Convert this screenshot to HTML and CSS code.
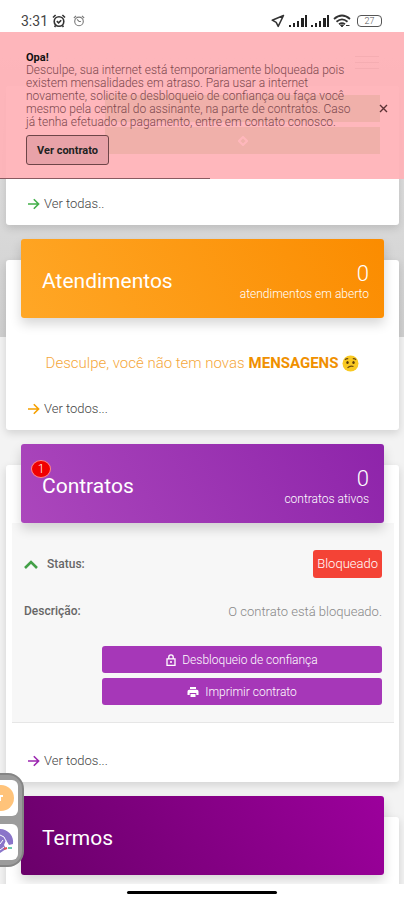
FILE: index.html
```html
<!DOCTYPE html>
<html lang="pt-BR">
<head>
    <meta charset="UTF-8">
    <meta name="viewport" content="width=device-width, initial-scale=1.0">
    <title>Central do Assinante</title>
    <link rel="stylesheet" href="styles.css">
</head>
<body>
    <div class="status-bar">
        <div class="status-left">
            <span class="clock">3:31</span>
            <svg width="14" height="14" viewBox="0 0 14 14" fill="none" stroke="#333" stroke-width="1.6">
                <circle cx="7" cy="7.5" r="4.8"/>
                <path d="M1 3.5L3.6 1M13 3.5L10.4 1M4.8 7.2l1.8 1.7 2.6-2.6M3.6 11.4L2.6 13M10.4 11.4l1 1.6"/>
            </svg>
            <svg class="alarm-thin" width="12" height="12" viewBox="0 0 14 14" fill="none" stroke="#777" stroke-width="1.3">
                <circle cx="7" cy="7.5" r="5"/>
                <path d="M1 3.5L3.6 1M13 3.5L10.4 1M4.8 5l2.4 2.6h2"/>
            </svg>
        </div>
        <div class="status-right">
            <svg width="14" height="14" viewBox="0 0 14 14" fill="none" stroke="#333" stroke-width="1.5" stroke-linejoin="round">
                <path d="M12.5 1.5L1.2 6.2l4 2.2 2 4z"/>
            </svg>
            <svg width="18" height="12" viewBox="0 0 18 12" fill="#222">
                <path d="M0 10h2v2H0zM4 8h2v4H4zM8 6h2v6H8zM12 3h3v9h-3zM16 0h2v12h-2z"/>
            </svg>
            <svg width="18" height="12" viewBox="0 0 18 12" fill="#222">
                <path d="M0 10h2v2H0zM4 8h2v4H4zM8 6h2v6H8zM12 3h3v9h-3zM16 0h2v12h-2z"/>
            </svg>
            <svg width="18" height="14" viewBox="0 0 18 14" fill="none" stroke="#333" stroke-width="1.8">
                <path d="M1 5Q9-2 17 5M3.5 7.7q5.500-4.700 11 0M6 10.300q3-2.400 6 0"/>
                <path d="M7.500 11h3L9 13zM13 11.500h3.500" fill="#333" stroke-width="1"/>
            </svg>
            <span class="battery">27</span>
        </div>
    </div>

    <main>
        <div class="backdrop"></div>

        <div class="alert" role="alert">
            <div class="alert-text">
                <strong>Opa!</strong>
                <p>Desculpe, sua internet está temporariamente bloqueada pois existem mensalidades em atraso. Para usar a internet novamente, solicite o desbloqueio de confiança ou faça você mesmo pela central do assinante, na parte de contratos. Caso já tenha efetuado o pagamento, entre em contato conosco.</p>
                <button class="alert-button">Ver contrato</button>
            </div>
            <button class="alert-close" aria-label="Fechar">
                <svg width="9" height="9" viewBox="0 0 9 9" stroke="#5c3236" stroke-width="1.4"><path d="M1 1l7 7M8 1L1 8"/></svg>
            </button>
            <div class="alert-progress"></div>
        </div>

        <header class="navbar">
            <button class="menu" aria-label="Menu"><span></span><span></span><span></span></button>
        </header>

        <section class="card card-faturas">
            <div class="faturas-actions">
                <div class="bar"></div>
                <div class="bar"><svg width="10" height="10" viewBox="0 0 10 10" fill="none" stroke="#fff" stroke-width="2"><path d="M5 1l4 4-4 4-4-4z"/></svg></div>
            </div>
            <a class="more green" href="#">
                <svg width="12" height="12" viewBox="0 0 12 12"><path d="M0 6h10.500M5.800 1.200L10.600 6l-4.800 4.800"/></svg>
                <span>Ver todas..</span>
            </a>
        </section>

        <section class="card">
            <div class="banner orange-banner">
                <h2>Atendimentos</h2>
                <div class="total"><b>0</b><span>atendimentos em aberto</span></div>
            </div>
            <p class="empty">Desculpe, você não tem novas <strong>MENSAGENS</strong>
                <svg width="17" height="17" viewBox="0 0 17 17">
                    <circle cx="8.500" cy="8.500" r="8" fill="#f9c922"/>
                    <path d="M3 4.800q1.500-1.500 3.200-1M10.800 3.800q1.800-.5 3.200 1M5.500 12.800q2.500-2.500 6-1.300" fill="none" stroke="#6b4a10" stroke-width="1.200"/>
                    <ellipse cx="5.500" cy="7.500" rx="1.200" ry="1.600" fill="#5a3c0c"/>
                    <ellipse cx="11.500" cy="7.500" rx="1.200" ry="1.600" fill="#5a3c0c"/>
                </svg>
            </p>
            <a class="more orange" href="#">
                <svg width="12" height="12" viewBox="0 0 12 12"><path d="M0 6h10.500M5.800 1.200L10.600 6l-4.800 4.800"/></svg>
                <span>Ver todos...</span>
            </a>
        </section>

        <section class="card">
            <div class="banner purple-banner">
                <span class="badge">1</span>
                <h2>Contratos</h2>
                <div class="total"><b>0</b><span>contratos ativos</span></div>
            </div>
            <div class="contract">
                <div class="row">
                    <svg width="14" height="9" viewBox="0 0 14 9" fill="none" stroke="#43a047" stroke-width="2.600"><path d="M1 8l6-6 6 6"/></svg>
                    <span class="label">Status:</span>
                    <span class="status">Bloqueado</span>
                </div>
                <div class="row">
                    <span class="label">Descrição:</span>
                    <span class="value">O contrato está bloqueado.</span>
                </div>
                <div class="contract-actions">
                    <button>
                        <svg width="10" height="12" viewBox="0 0 10 12" fill="none" stroke="#fff" stroke-width="1.300"><path d="M1 4.800h8v6.500H1zM2.800 4.800V3a2.200 2.200 0 0 1 4.400 0v1.800"/><circle cx="5" cy="8" r="1" fill="#fff" stroke="none"/></svg>
                        Desbloqueio de confiança
                    </button>
                    <button>
                        <svg width="12" height="12" viewBox="0 0 12 12" fill="#fff"><path d="M3 1h6v2H3zM2.500 3.700h7A1.800 1.800 0 0 1 11.500 5.500V9H9.300V7H2.700v2H.5V5.500a1.800 1.800 0 0 1 2-1.800zM3.500 8h5v3h-5z"/></svg>
                        Imprimir contrato
                    </button>
                </div>
            </div>
            <a class="more purple" href="#">
                <svg width="12" height="12" viewBox="0 0 12 12"><path d="M0 6h10.500M5.800 1.200L10.600 6l-4.800 4.800"/></svg>
                <span>Ver todos...</span>
            </a>
        </section>

        <section class="card card-termos">
            <div class="banner dark-banner">
                <h2>Termos</h2>
            </div>
        </section>

        <div class="side-panel">
            <div class="app">
                <svg width="18" height="36" viewBox="0 0 18 36"><circle cx="1" cy="18" r="13" fill="#ffc37a"/><path d="M0 15h3v2H1v4H0z" fill="#fff"/></svg>
            </div>
            <div class="app">
                <svg width="18" height="36" viewBox="0 0 18 36">
                    <path d="M0 5a13 13 0 0 1 13 15l-4 1-3-5-2 5 2 4-6 4z" fill="#8a74c9"/>
                    <path d="M0 11q5 1 6 6M0 20l3-4M0 26l4-3" stroke="#fff" stroke-width="1" fill="none"/>
                    <path d="M4 25l3-1" stroke="#e05252" stroke-width="2"/>
                    <path d="M8 24h4" stroke="#6cc7b0" stroke-width="2"/>
                </svg>
            </div>
        </div>
    </main>

    <div class="nav-bar"><div class="pill"></div></div>
</body>
</html>
```

FILE: styles.css
```css
* {
    box-sizing: border-box;
}

body {
    font-family: Roboto, sans-serif;
    font-weight: 300;
    background: #fff;
    color: #444;
    margin: 0;
    height: 100vh;
    display: flex;
    flex-direction: column;
}

button {
    font-family: inherit;
    border: none;
    cursor: pointer;
}

h2, p {
    margin: 0;
}

svg {
    flex-shrink: 0;
}

/* phone status bar */
.status-bar {
    display: flex;
    justify-content: space-between;
    align-items: center;
    height: 32px;
    padding: 10px 22px 0 21px;
    flex-shrink: 0;
}

.status-left,
.status-right {
    display: flex;
    align-items: center;
    gap: 4px;
}

.clock {
    font-size: 14px;
    font-weight: 400;
    color: #444;
}

.alarm-thin {
    margin-left: 3px;
}

.battery {
    width: 25px;
    height: 12px;
    margin-left: 2px;
    border: 1px solid #555;
    border-radius: 4px;
    font-size: 9px;
    line-height: 10px;
    text-align: center;
    color: #555;
}

main {
    position: relative;
    flex: 1;
    overflow: hidden;
    background: #f3f3f3;
}

.backdrop {
    position: absolute;
    top: 0;
    left: 0;
    right: 0;
    height: 305px;
    background: linear-gradient(#e8e8e8, #d0d0d0);
}

/* blocked internet warning */
.alert {
    position: absolute;
    top: 0;
    left: 0;
    right: 0;
    z-index: 5;
    display: flex;
    align-items: center;
    padding: 19px 16px 14px 26px;
    background: rgba(255, 178, 183, 0.93);
}

.alert-text {
    flex: 1;
    padding-right: 20px;
    font-size: 12px;
    line-height: 13px;
    color: #7d484e;
}

.alert-text strong {
    display: block;
    font-size: 11px;
    font-weight: 700;
    color: #111;
}

.alert-button {
    height: 30px;
    margin-top: 6px;
    padding: 0 10px;
    border: 1px solid #6e4548;
    border-radius: 3px;
    background: #e8a2a8;
    font-size: 11px;
    font-weight: 700;
    color: #222;
}

.alert-close {
    display: flex;
    padding: 0;
    background: none;
}

.alert-progress {
    position: absolute;
    left: 0;
    bottom: 0;
    width: 52%;
    height: 1px;
    background: #8a5a60;
}

.navbar {
    position: relative;
    display: flex;
    justify-content: flex-end;
    padding: 24px 25px 0;
    height: 54px;
}

.menu {
    display: flex;
    flex-direction: column;
    gap: 5px;
    width: 24px;
    padding: 0;
    background: none;
}

.menu span {
    height: 1px;
    width: 100%;
    background: #777;
}

.card {
    position: relative;
    margin: 0 5px 35px 6px;
    padding: 0 15px 12px;
    background: #fff;
    border-radius: 3px;
    box-shadow: 0 3px 8px rgba(0, 0, 0, 0.14);
}

.card-faturas {
    display: flex;
    flex-direction: column;
    justify-content: space-between;
    height: 139px;
}

.faturas-actions {
    display: flex;
    flex-direction: column;
    gap: 5px;
    padding: 9px 4px 0 84px;
}

.bar {
    display: flex;
    align-items: center;
    justify-content: center;
    height: 27px;
    background: #30a000;
}

.banner {
    position: relative;
    top: -21px;
    display: flex;
    justify-content: space-between;
    align-items: center;
    height: 79px;
    margin-bottom: -21px;
    padding: 5px 15px 0 21px;
    border-radius: 3px;
    color: #fff;
    box-shadow: 0 6px 12px rgba(0, 0, 0, 0.16);
}

.banner h2 {
    font-size: 21px;
    font-weight: 400;
}

.total {
    display: flex;
    flex-direction: column;
    align-items: flex-end;
    font-size: 12px;
    line-height: 14px;
}

.total b {
    font-size: 22px;
    line-height: 26px;
    font-weight: 300;
}

.orange-banner {
    background: linear-gradient(60deg, #ffa726, #fb8c00);
}

.purple-banner {
    background: linear-gradient(60deg, #ab47bc, #8e24aa);
}

.dark-banner {
    background: linear-gradient(60deg, #6a006a, #9c009c);
}

.badge {
    position: absolute;
    top: 16px;
    left: 10px;
    width: 20px;
    height: 18px;
    border: 1px solid #ff8a8a;
    border-radius: 50%;
    background: #f00000;
    font-size: 12px;
    line-height: 16px;
    text-align: center;
}

.empty {
    display: flex;
    justify-content: center;
    align-items: center;
    gap: 4px;
    padding: 35px 0 27px;
    font-size: 15px;
    line-height: 20px;
    color: #f5a73b;
}

.empty strong {
    font-weight: 700;
    color: #f09000;
}

.more {
    display: flex;
    align-items: center;
    gap: 4px;
    padding-left: 7px;
    font-size: 13px;
    line-height: 18px;
    color: #444;
    text-decoration: none;
}

.more svg {
    fill: none;
    stroke: currentColor;
    stroke-width: 1.6;
}

.more span {
    color: #444;
}

.green {
    color: #43b04a;
}

.orange {
    color: #f5a000;
}

.purple {
    color: #9c27b0;
}

.contract {
    margin: 0 -10px 29px -9px;
    padding: 27px 12px 17px;
    background: #f7f7f7;
    border-bottom: 1px solid #e6e6e6;
    font-size: 13px;
}

.row {
    display: flex;
    align-items: center;
    gap: 9px;
    min-height: 28px;
    margin-bottom: 19px;
}

.label {
    font-size: 12px;
    font-weight: 500;
    color: #666;
}

.value {
    margin-left: auto;
    color: #888;
}

.status {
    margin-left: auto;
    padding: 0 4px;
    border-radius: 3px;
    background: #f44336;
    color: #fff;
    line-height: 28px;
}

.contract-actions {
    display: flex;
    flex-direction: column;
    gap: 5px;
    margin: 21px 0 0 78px;
}

.contract-actions button {
    display: flex;
    align-items: center;
    justify-content: center;
    gap: 6px;
    height: 27px;
    border-radius: 3px;
    background: #a637b8;
    color: #fff;
    font-size: 12px;
    font-weight: 300;
}

.card-termos {
    height: 170px;
}

/* floating launcher on the left edge */
.side-panel {
    position: absolute;
    left: 0;
    bottom: 17px;
    z-index: 6;
    display: flex;
    flex-direction: column;
    gap: 8px;
    padding: 5px 4px 5px 0;
    border: 2px solid #858585;
    border-left: none;
    border-radius: 0 16px 16px 0;
    background: #9c9c9c;
}

.app {
    display: flex;
    width: 18px;
    height: 36px;
    overflow: hidden;
    border-radius: 0 6px 6px 0;
    background: #fff;
}

.nav-bar {
    display: flex;
    justify-content: center;
    align-items: center;
    height: 16px;
    flex-shrink: 0;
    padding-top: 1px;
}

.pill {
    width: 37%;
    height: 3px;
    border-radius: 2px;
    background: #000;
}
```
